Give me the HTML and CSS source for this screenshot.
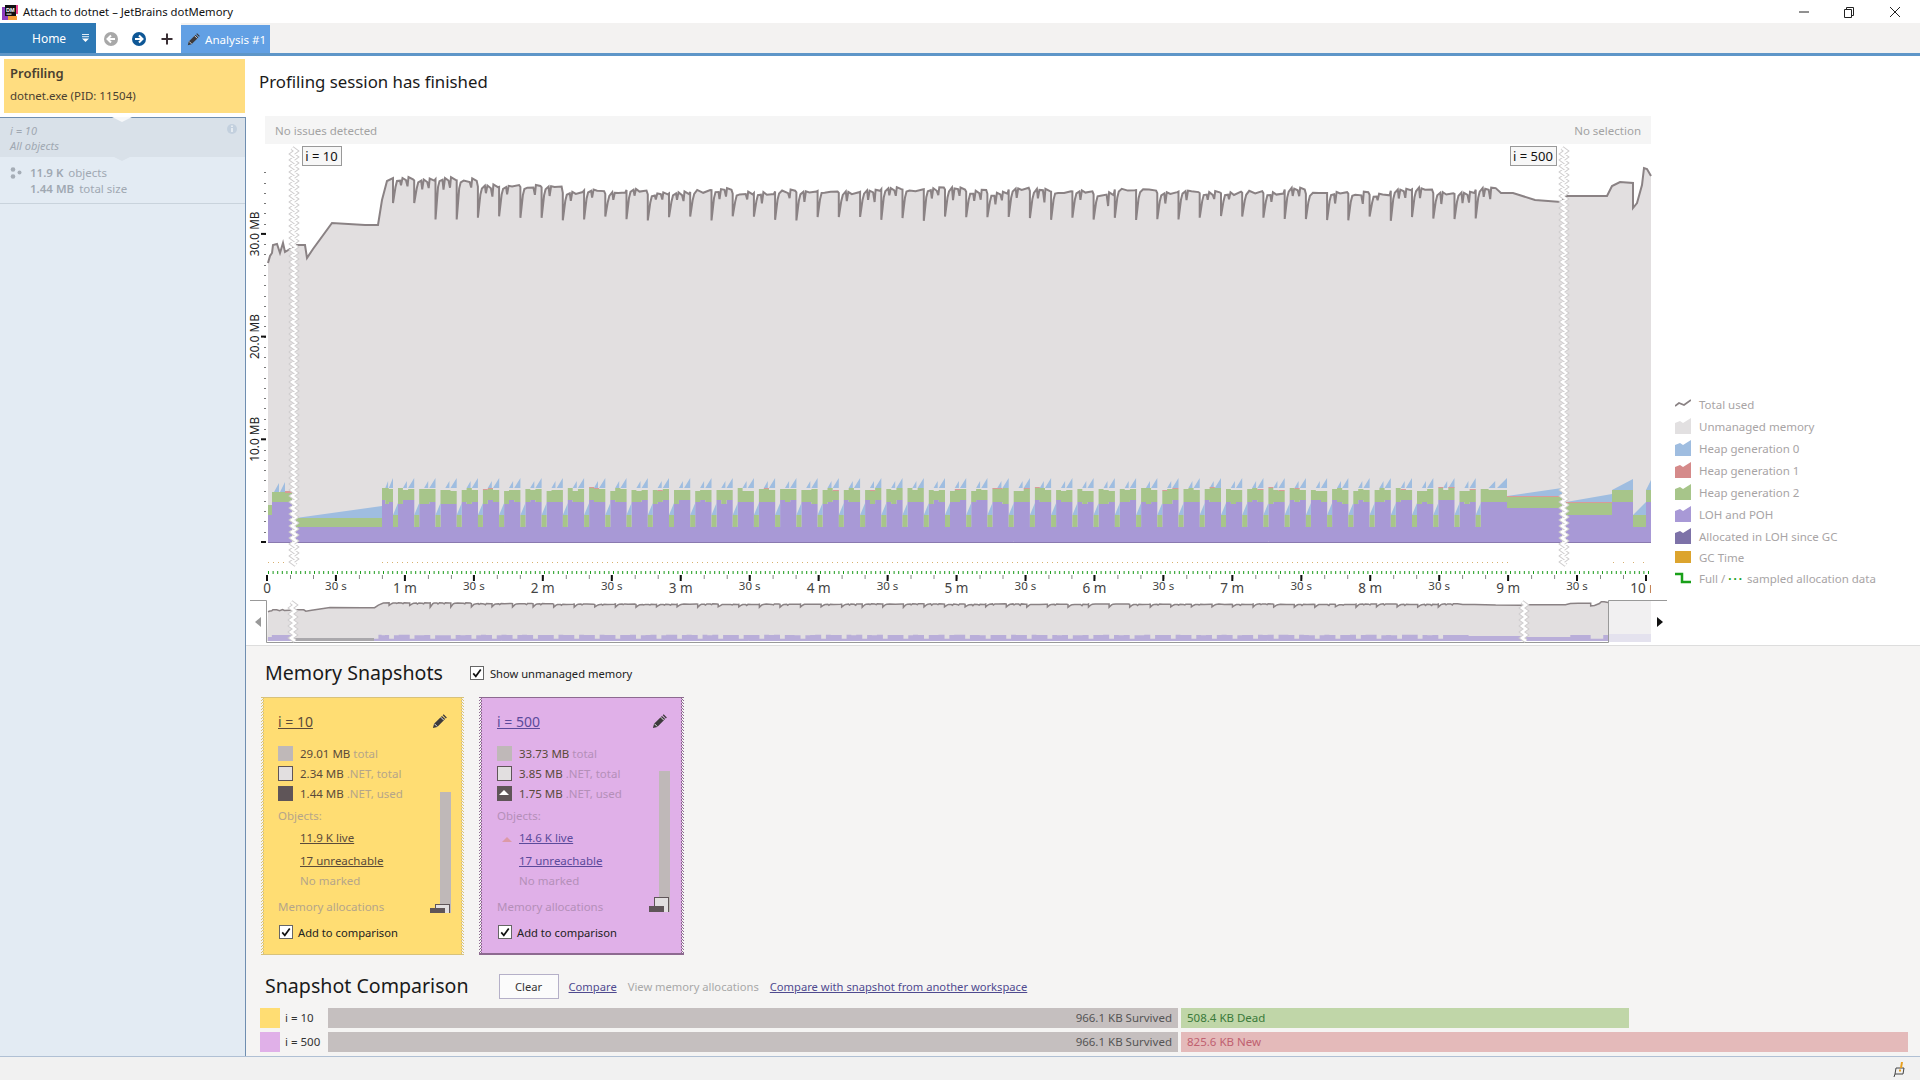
FILE: index.html
```html
<!DOCTYPE html>
<html lang="en">
<head>
  <meta charset="UTF-8" />
  <title>Attach to dotnet – JetBrains dotMemory</title>
  <link rel="stylesheet" href="styles.css">
</head>
<body>
  <svg class="defs" width="0" height="0">
    <symbol id="pencil" viewBox="0 0 16 16">
      <path d="M1 15l1.2-4.6L10.6 2l3.4 3.4-8.4 8.4z" fill="#3d3a3c"/>
      <path d="M11.4 1.2l1-.9 3.4 3.4-1 1z" fill="#3d3a3c"/>
      <path d="M2.6 10.4l3 3M9.4 3.4l3.2 3.2" stroke="#f4f4f4" stroke-width="1" fill="none"/>
    </symbol>
    <symbol id="check" viewBox="0 0 14 14">
      <path d="M2.6 7.4l3 3.4 5.8-8" stroke="#111" stroke-width="2" fill="none"/>
    </symbol>
  </svg>

  <header class="titlebar">
    <svg class="app-logo" width="16" height="16" viewBox="0 0 16 16">
      <rect x="0" y="3" width="14" height="13" fill="#8f3fc0"/>
      <rect x="8" y="1" width="8" height="9" fill="#e8458f"/>
      <rect x="6" y="12" width="9" height="4" fill="#f4a03a"/>
      <rect x="3" y="1" width="11" height="11" fill="#111"/>
      <text x="4" y="8" class="logo-text">DM</text>
      <rect x="4.5" y="9.6" width="5" height="1" fill="#fff"/>
    </svg>
    <span class="window-title">Attach to dotnet – JetBrains dotMemory</span>
    <div class="window-buttons">
      <svg width="46" height="20" viewBox="0 0 46 20"><path d="M19 10h10" stroke="#222"/></svg>
      <svg width="46" height="20" viewBox="0 0 46 20"><path d="M18.5 7.5h7v8h-7zM20.5 7.500v-2h7v8h-2" stroke="#222" fill="none"/></svg>
      <svg width="46" height="20" viewBox="0 0 46 20"><path d="M18 5l10 10M28 5L18 15" stroke="#222" fill="none"/></svg>
    </div>
  </header>

  <nav class="tabbar">
    <div class="home-tab">
      <span>Home</span>
      <svg class="home-menu" width="7" height="8" viewBox="0 0 8 9"><path d="M0 .5h8M0 3h8" stroke="#fff"/><path d="M0 5h8L4 9z" fill="#fff"/></svg>
    </div>
    <div class="nav-buttons">
      <svg width="16" height="16" viewBox="0 0 16 16"><circle cx="8" cy="8" r="7" fill="#a8a8a8"/><path d="M12 8H5M8 4.500L4.500 8 8 11.500" stroke="#fff" stroke-width="2" fill="none"/></svg>
      <svg width="16" height="16" viewBox="0 0 16 16"><circle cx="8" cy="8" r="7" fill="#0e5796"/><path d="M4 8h7M8 4.500L11.500 8 8 11.500" stroke="#fff" stroke-width="2" fill="none"/></svg>
      <svg width="16" height="16" viewBox="0 0 16 16"><path d="M8 2.500v11M2.500 8h11" stroke="#3a2f35" stroke-width="2"/></svg>
    </div>
    <div class="analysis-tab">
      <svg width="13" height="13"><use href="#pencil"/></svg>
      <span>Analysis #1</span>
    </div>
  </nav>

  <div class="workspace">
    <aside class="sidebar">
      <div class="profiling-card">
        <strong>Profiling</strong>
        <span>dotnet.exe (PID: 11504)</span>
      </div>
      <div class="snapshot-list">
        <div class="snapshot-head">
          <span>i = 10</span>
          <span>All objects</span>
          <svg class="info-icon" width="10" height="10" viewBox="0 0 10 10"><circle cx="5" cy="5" r="5" fill="#c3d0de"/><path d="M5 4v4M5 1.500v1.500" stroke="#eef2f6" stroke-width="1.600"/></svg>
        </div>
        <div class="snapshot-body">
          <svg class="dots-icon" width="12" height="12" viewBox="0 0 12 12"><circle cx="3" cy="2.500" r="2.300" fill="#a5adb6"/><circle cx="9.500" cy="5.500" r="2" fill="#a5adb6"/><circle cx="3" cy="9.500" r="2.300" fill="#a5adb6"/></svg>
          <div class="snapshot-stats">
            <div><b>11.9 K</b> objects</div>
            <div><b>1.44 MB</b> total size</div>
          </div>
        </div>
      </div>
    </aside>

    <main class="main">
      <section class="session">
        <h1>Profiling session has finished</h1>
        <div class="chart-row">
          <div class="chart-col">
            <div class="issues-bar">
              <span>No issues detected</span>
              <span>No selection</span>
            </div>
            <div id="chart"></div>
          </div>
          <ul class="legend">
            <li><svg width="16" height="16" viewBox="0 0 16 16"><path d="M0 10l4-3 5 2 7-5" stroke="#8a8284" stroke-width="1.800" fill="none"/></svg><span>Total used</span></li>
            <li><svg width="16" height="16" viewBox="0 0 16 16"><path d="M0 16V5l5-2 3 2 8-5v16z" fill="#e2e0e1"/></svg><span>Unmanaged memory</span></li>
            <li><svg width="16" height="16" viewBox="0 0 16 16"><path d="M0 16V5l5-2 3 2 8-5v16z" fill="#9fbde0"/></svg><span>Heap generation 0</span></li>
            <li><svg width="16" height="16" viewBox="0 0 16 16"><path d="M0 16V5l5-2 3 2 8-5v16z" fill="#d58a8a"/></svg><span>Heap generation 1</span></li>
            <li><svg width="16" height="16" viewBox="0 0 16 16"><path d="M0 16V5l5-2 3 2 8-5v16z" fill="#a7c58a"/></svg><span>Heap generation 2</span></li>
            <li><svg width="16" height="16" viewBox="0 0 16 16"><path d="M0 16V5l5-2 3 2 8-5v16z" fill="#a899d6"/></svg><span>LOH and POH</span></li>
            <li><svg width="16" height="16" viewBox="0 0 16 16"><path d="M0 16V5l5-2 3 2 8-5v16z" fill="#7d72a8"/></svg><span>Allocated in LOH since GC</span></li>
            <li class="legend-gc"><svg width="16" height="12" viewBox="0 0 16 12"><rect width="16" height="12" fill="#dca42e"/></svg><span>GC Time</span></li>
            <li><svg width="16" height="12" viewBox="0 0 16 12"><path d="M0 2h7v8h9" stroke="#19a019" stroke-width="2.500" fill="none"/></svg><span>Full / <i class="green-dots">···</i> sampled allocation data</span></li>
          </ul>
        </div>
      </section>

      <section class="snapshots">
        <div class="section-head">
          <h2>Memory Snapshots</h2>
          <label class="check-label"><span class="checkbox"><svg width="12" height="12"><use href="#check"/></svg></span>Show unmanaged memory</label>
        </div>

        <div class="cards">
          <article class="card card-yellow">
            <div class="card-title"><a>i = 10</a><svg width="15" height="15"><use href="#pencil"/></svg></div>
            <div class="stat first-stat"><span class="swatch swatch-total"></span><b>29.01 MB</b> total</div>
            <div class="stat"><span class="swatch swatch-net"></span><b>2.34 MB</b> .NET, total</div>
            <div class="stat"><span class="swatch swatch-used"></span><b>1.44 MB</b> .NET, used</div>
            <div class="muted objects">Objects:</div>
            <div class="object-row live-row"><a>11.9 K live</a></div>
            <div class="object-row unreachable-row"><a>17 unreachable</a></div>
            <div class="object-row muted">No marked</div>
            <div class="muted allocations">Memory allocations</div>
            <label class="check-label add-check"><span class="checkbox"><svg width="12" height="12"><use href="#check"/></svg></span>Add to comparison</label>
            <div class="mini-bars bars-short">
              <span class="bar-total"></span><span class="bar-net"></span><span class="bar-used"></span>
            </div>
          </article>

          <article class="card card-purple">
            <div class="card-title"><a>i = 500</a><svg width="15" height="15"><use href="#pencil"/></svg></div>
            <div class="stat first-stat"><span class="swatch swatch-total"></span><b>33.73 MB</b> total</div>
            <div class="stat"><span class="swatch swatch-net"></span><b>3.85 MB</b> .NET, total</div>
            <div class="stat"><span class="swatch swatch-used swatch-up"></span><b>1.75 MB</b> .NET, used</div>
            <div class="muted objects">Objects:</div>
            <div class="object-row live-row"><span class="up-mark"></span><a>14.6 K live</a></div>
            <div class="object-row unreachable-row"><a>17 unreachable</a></div>
            <div class="object-row muted">No marked</div>
            <div class="muted allocations">Memory allocations</div>
            <label class="check-label add-check"><span class="checkbox"><svg width="12" height="12"><use href="#check"/></svg></span>Add to comparison</label>
            <div class="mini-bars bars-tall">
              <span class="bar-total"></span><span class="bar-net"></span><span class="bar-used"></span>
            </div>
          </article>
        </div>

        <div class="compare-head">
          <h2>Snapshot Comparison</h2>
          <button class="clear-btn">Clear</button>
          <a class="link">Compare</a>
          <span class="disabled-link">View memory allocations</span>
          <a class="link">Compare with snapshot from another workspace</a>
        </div>

        <div class="compare-row">
          <span class="compare-swatch swatch-yellow"></span>
          <span class="compare-label">i = 10</span>
          <div class="seg seg-survived">966.1 KB Survived</div>
          <div class="seg seg-dead">508.4 KB Dead</div>
        </div>
        <div class="compare-row">
          <span class="compare-swatch swatch-purple"></span>
          <span class="compare-label">i = 500</span>
          <div class="seg seg-survived">966.1 KB Survived</div>
          <div class="seg seg-new">825.6 KB New</div>
        </div>
      </section>
    </main>
  </div>

  <footer class="statusbar">
    <svg width="14" height="16" viewBox="0 0 14 16">
      <path d="M3 7h8l-1 6H2zM2 13l-1 3" stroke="#444" fill="none"/>
      <path d="M8 1h2l-1 6H7z" fill="#e8a020"/>
      <rect x="6" y="8.500" width="2" height="2" fill="#e8a020"/>
    </svg>
  </footer>

  <script src="chart.js"></script>
</body>
</html>
```

FILE: styles.css
```css
* {
  box-sizing: border-box;
}
body {
  margin: 0;
  width: 1920px;
  height: 1080px;
  overflow: hidden;
  display: flex;
  flex-direction: column;
  font-family: "Noto Sans", sans-serif;
  font-size: 11.5px;
  color: #222;
  background: #fff;
}
.defs {
  display: block;
  height: 0;
}
a {
  text-decoration: underline;
}
h1, h2, ul {
  margin: 0;
  padding: 0;
  font-weight: 400;
}

/* title bar */
.titlebar {
  height: 23px;
  display: flex;
  align-items: center;
  padding-left: 2px;
  flex: none;
}
.logo-text {
  font-family: "Liberation Sans", sans-serif;
  font-size: 5.5px;
  font-weight: 700;
  fill: #fff;
}
.window-title {
  margin-left: 5px;
  font-size: 11.3px;
  color: #111;
}
.window-buttons {
  margin-left: auto;
  padding-right: 2px;
  display: flex;
}

/* tabs */
.tabbar {
  height: 33px;
  flex: none;
  display: flex;
  background: #f3f2f1;
  border-bottom: 3px solid #5e96c8;
}
.home-tab {
  width: 96px;
  background: #2e79b5;
  color: #fff;
  display: flex;
  align-items: center;
  padding-left: 32px;
  font-size: 12px;
}
.home-menu {
  margin-left: 16px;
}
.nav-buttons {
  width: 85px;
  background: #fff;
  display: flex;
  align-items: center;
  gap: 12px;
  padding: 2px 0 0 7px;
}
.analysis-tab {
  width: 89px;
  margin-top: 2px;
  background: #62a0e4;
  color: #fff;
  display: flex;
  align-items: center;
  gap: 5px;
  padding-left: 6px;
  font-size: 11.6px;
}

/* layout */
.workspace {
  height: 1000px;
  flex: none;
  display: flex;
}
.sidebar {
  width: 246px;
  flex: none;
  display: flex;
  flex-direction: column;
}
.main {
  flex: 1;
  display: flex;
  flex-direction: column;
}

/* sidebar */
.profiling-card {
  margin: 3px 1px 0 4px;
  height: 54px;
  padding: 5px 6px;
  background: #ffdd80;
  color: #4a4030;
  display: flex;
  flex-direction: column;
  gap: 6px;
}
.profiling-card strong {
  font-size: 13px;
  font-weight: 600;
}
.snapshot-list {
  flex: 1;
  margin-top: 4px;
  background: #e3ebf3;
  border-top: 1px solid #6f8eb0;
  border-right: 1px solid #6f8eb0;
  color: #a0a8b2;
}
.snapshot-head {
  position: relative;
  height: 39px;
  background: #d9e1e9;
  padding: 5px 0 0 10px;
  display: flex;
  flex-direction: column;
  font-size: 11px;
  font-style: italic;
}
.snapshot-head::before {
  content: "";
  position: absolute;
  left: 112px;
  top: -1px;
  border: 10px solid transparent;
  border-top: 5px solid #f6f8fa;
  border-bottom: 0;
}
.snapshot-head::after {
  content: "";
  position: absolute;
  left: 114px;
  top: 39px;
  border: 8px solid transparent;
  border-top: 4px solid #d9e1e9;
  border-bottom: 0;
}
.info-icon {
  position: absolute;
  right: 8px;
  top: 6px;
}
.snapshot-body {
  height: 47px;
  border-bottom: 1px solid #c9d3dc;
  padding: 8px 0 0 10px;
  display: flex;
  gap: 8px;
}
.dots-icon {
  margin-top: 2px;
}
.snapshot-stats div {
  height: 16px;
  line-height: 16px;
}
.snapshot-stats b {
  font-weight: 600;
  margin-right: 2px;
}

/* session / chart */
.session {
  height: 590px;
  flex: none;
  border-bottom: 1px solid #ddd;
}
.session h1 {
  height: 60px;
  padding: 13px 0 0 13px;
  font-size: 16.8px;
  line-height: 26px;
  color: #1a1a1a;
}
.chart-row {
  display: flex;
}
.chart-col {
  width: 1429px;
  flex: none;
}
.issues-bar {
  margin-left: 19px;
  width: 1386px;
  height: 28px;
  background: #f5f5f5;
  color: #a3a3a3;
  display: flex;
  justify-content: space-between;
  align-items: center;
  padding: 0 10px;
}
#chart svg {
  display: block;
}
.axis-label {
  font-size: 11.8px;
  fill: #222;
}
.time-small {
  font-size: 11.5px;
  fill: #444;
  text-anchor: middle;
}
.time-big {
  font-size: 13.5px;
  fill: #444;
  text-anchor: middle;
}
.flag-box {
  fill: #f7f7f7;
  stroke: #999;
}
.flag-text {
  font-size: 13px;
  fill: #111;
  text-anchor: middle;
}

/* legend */
.legend {
  list-style: none;
  margin-top: 277px;
  color: #a8a4a5;
}
.legend li {
  height: 22px;
  display: flex;
  align-items: center;
  gap: 8px;
  white-space: pre;
}
.legend .legend-gc {
  height: 20px;
}
.green-dots {
  color: #19a019;
  font-style: normal;
  font-weight: 700;
  letter-spacing: 2px;
}

/* snapshots */
.snapshots {
  flex: 1;
  background: #f5f4f3;
  padding-left: 14px;
}
.section-head {
  margin: 11px 0 0 5px;
  height: 30px;
  display: flex;
  align-items: center;
  gap: 27px;
}
.section-head h2,
.compare-head h2 {
  font-size: 19.6px;
  color: #1a1a1a;
}
.section-head .check-label {
  margin-top: 2px;
  gap: 6px;
}
.compare-head h2 {
  margin-top: -2px;
}
.check-label {
  display: flex;
  align-items: center;
  gap: 5px;
  color: #222;
  font-size: 11.2px;
}
.checkbox {
  width: 14px;
  height: 14px;
  background: #fff;
  border: 1px solid #666;
  display: flex;
  align-items: center;
  justify-content: center;
}
.cards {
  margin: 10px 0 0 1px;
  display: flex;
  gap: 15px;
}
.card {
  position: relative;
  width: 203px;
  height: 258px;
  padding: 13px 17px 0;
  color: #5a4a3a;
}
.card + .card {
  width: 205px;
  padding-left: 18px;
}
.card::before,
.card::after {
  content: "";
  position: absolute;
  top: 0;
  bottom: 0;
  width: 3px;
  background-size: 3px 3px;
  background-position: 0 0, 0 3px;
  background-repeat: repeat-y;
}
.card::before {
  left: 0;
  background-image:
    linear-gradient(to bottom right, #f5f4f3 38%, var(--edge) 38% 62%, transparent 62%),
    linear-gradient(to top right, #f5f4f3 38%, var(--edge) 38% 62%, transparent 62%);
}
.card::after {
  right: 0;
  background-image:
    linear-gradient(to bottom left, #f5f4f3 38%, var(--edge) 38% 62%, transparent 62%),
    linear-gradient(to top left, #f5f4f3 38%, var(--edge) 38% 62%, transparent 62%);
}
.card-yellow {
  --edge: #d8c27a;
  background: #ffdd73;
  border-top: 1px solid #d8c27a;
  border-bottom: 1px solid #d8c27a;
}
.card-purple {
  --edge: #8d6a90;
  background: #e0b0e8;
  border-top: 1px solid #8d6a90;
  border-bottom: 2px solid #8d6a90;
}
.card-title {
  height: 20px;
  display: flex;
  align-items: center;
  justify-content: space-between;
  font-size: 14px;
}
.card-purple .card-title a,
.card-purple .object-row a {
  color: #5b4a9b;
}
.stat {
  height: 20px;
  display: flex;
  align-items: center;
  white-space: pre;
  color: #b5a58a;
}
.card-purple .stat,
.card-purple .muted {
  color: #b48fb8;
}
.first-stat {
  margin-top: 12px;
}
.stat b {
  font-weight: 400;
  color: #5a4a3a;
}
.swatch {
  width: 15px;
  height: 15px;
  margin-right: 7px;
}
.swatch-total {
  background: #bfb8b8;
}
.swatch-net {
  background: #e2dfe0;
  border: 1px solid #5f5558;
}
.swatch-used {
  background: #5f5558;
}
.swatch-up {
  position: relative;
}
.swatch-up::after {
  content: "";
  position: absolute;
  left: 2px;
  top: 4px;
  border: 5.5px solid transparent;
  border-top: 0;
  border-bottom: 5px solid #fff;
}
.muted {
  color: #b5a58a;
}
.objects {
  margin-top: 3px;
  height: 20px;
  line-height: 20px;
}
.object-row {
  position: relative;
  height: 20px;
  line-height: 20px;
  margin-left: 22px;
}
.live-row {
  margin-top: 2px;
}
.unreachable-row {
  margin-top: 3px;
}
.up-mark {
  position: absolute;
  left: -17px;
  top: 9px;
  border: 5px solid transparent;
  border-top: 0;
  border-bottom: 5px solid #dc9aa6;
}
.allocations {
  margin-top: 6px;
  height: 20px;
  line-height: 20px;
}
.add-check {
  margin: 5px 0 0 1px;
  height: 20px;
}
.mini-bars {
  position: absolute;
  bottom: 41px;
  width: 21px;
}
.bars-short {
  left: 169px;
}
.bars-tall {
  left: 170px;
}
.mini-bars span {
  position: absolute;
  bottom: 0;
}
.bar-total {
  right: 0;
  width: 11px;
  background: #bfb8b8;
}
.bar-net {
  background: #e2dfe0;
  border: 1px solid #5f5558;
  border-bottom-width: 0;
  width: 15px;
  right: 1px;
}
.bar-used {
  background: #5f5558;
  width: 15px;
}
.bars-short .bar-total { height: 121px; }
.bars-short .bar-net { height: 9px; }
.bars-short .bar-used { height: 5px; right: 6px; }
.bars-tall .bar-total { height: 141px; }
.bars-tall .bar-net { height: 15px; }
.bars-tall .bar-used { height: 6px; right: 6px; }

/* comparison */
.compare-head {
  margin: 19px 0 0 5px;
  height: 25px;
  display: flex;
  align-items: center;
  white-space: nowrap;
  font-size: 11.2px;
}
.clear-btn {
  width: 60px;
  height: 25px;
  margin: 0 10px 0 30px;
  background: #fbfbfb;
  border: 1px solid #b5b0c8;
  font: inherit;
  color: #333;
}
.link {
  color: #4f4a8f;
  margin-right: 11px;
}
.disabled-link {
  color: #a8a8a8;
  margin-right: 11px;
}
.compare-row {
  height: 20px;
  margin-top: 4px;
  display: flex;
}
.compare-head + .compare-row {
  margin-top: 9px;
}
.compare-swatch {
  width: 20px;
}
.swatch-yellow {
  background: #ffdd73;
}
.swatch-purple {
  background: #e0b0e8;
}
.compare-label {
  width: 48px;
  padding-left: 5px;
  line-height: 20px;
  color: #333;
}
.seg {
  height: 20px;
  line-height: 20px;
  padding: 0 6px;
  white-space: nowrap;
}
.seg-survived {
  width: 850px;
  margin-right: 3px;
  background: #c5bfbf;
  color: #555;
  text-align: right;
}
.seg-dead {
  width: 448px;
  background: #c0d6a8;
  color: #3a7a3a;
}
.seg-new {
  width: 727px;
  background: #e4baba;
  color: #c06070;
}

/* status bar */
.statusbar {
  flex: 1;
  background: #f1f1f1;
  border-top: 1px solid #b0c0d4;
  display: flex;
  align-items: center;
  justify-content: flex-end;
  padding-right: 13px;
}
```

FILE: chart.js
```js
// Draws the memory timeline. All coordinates are page pixels, the viewBox lines them up.
const LEFT = 268, RIGHT = 1651, BASE = 542;
const COLORS = {
  area: '#e2dfe0', line: '#8a8284', purple: '#a899d6', green: '#a7c58a',
  blue: '#9fbde0', red: '#d99a98'
};

// small seeded random so the picture is the same every time
let seed = 7;
function rnd() {
  seed = (seed * 16807) % 2147483647;
  return seed / 2147483647;
}

function rect(x, y, w, h) {
  return `M${x.toFixed(1)} ${y}h${w.toFixed(1)}v${h}h${(-w).toFixed(1)}z`;
}
function tri(x1, x2, y, top) {
  return `M${x1.toFixed(1)} ${y}H${x2.toFixed(1)}V${top}z`;
}

// total used line
const line = [[268, 263], [270, 256], [272, 253], [273, 245], [277, 244], [280, 253], [283, 243],
  [285, 252], [290, 249], [292, 249], [297, 245], [305, 245], [307, 258], [313, 249], [332, 223],
  [365, 225], [378, 225], [382, 200], [387, 181], [393, 178]];

const GAPS = 52, PERIOD = 21.23, FIRST_GAP = 393;
for (let k = 0; k < GAPS; k++) {
  const x = FIRST_GAP + k * PERIOD;
  const dip = k < 2 ? 203 : 216 + rnd() * 5;
  const top = k < 4 ? 177 + rnd() * 2 : (k < 8 ? 184 + rnd() * 3 : 187 + rnd() * 6);
  line.push([x, top + 2], [x, dip], [x + 2.5, top + 10], [x + 4, top + 4], [x + 7, top + rnd() * 4]);
  if (rnd() < 0.7) line.push([x + 8, top + 7 + rnd() * 6], [x + 9.5, top + 1]);
  line.push([x + 13, top + 1 + rnd() * 3]);
  if (rnd() < 0.6) line.push([x + 14.5, top + 7 + rnd() * 7], [x + 15.5, top]);
  line.push([x + 20, top + rnd() * 3]);
}
line.push([1501, 193], [1513, 193], [1535, 200], [1561, 202], [1567, 196], [1607, 196], [1612, 186],
  [1620, 182], [1633, 183], [1633, 208], [1637, 203], [1642, 185], [1644, 168], [1647, 169], [1651, 176]);

function pointsToD(pts) {
  return pts.map((p, i) => (i ? 'L' : 'M') + p[0].toFixed(1) + ' ' + p[1].toFixed(1)).join('');
}
const lineD = pointsToD(line);
const areaD = lineD + `L${RIGHT} ${BASE}L${LEFT} ${BASE}z`;

// heap stacks
let purple = '', green = '', blue = '', red = '';

function stackBlock(x1, x2) {
  // one stretch between two GC gaps
  const w = x2 - x1;
  let x = x1;
  const cuts = [0.3, 0.62, 1];
  cuts.forEach(c => {
    const end = x1 + w * c;
    const pTop = 500 + Math.round(rnd() * 2) * 2;
    const gTop = 488 + Math.round(rnd() * 3);
    purple += rect(x, pTop, end - x, BASE - pTop);
    green += rect(x, gTop, end - x, pTop - gTop);
    if (rnd() < 0.15) red += rect(x, gTop - 1, end - x, 1);
    x = end;
  });
  blue += tri(x1 + w * 0.3, x1 + w * 0.55, 488, 481);
  blue += tri(x1 + w * 0.62, x2, 488, 478);
}

// start of the session, left of the first marker
purple += rect(268, 515, 4, 27) + rect(272, 502, 20, 40);
green += rect(268, 505, 4, 10) + rect(272, 492, 20, 10);
red += rect(285, 491, 7, 2);
blue += tri(274, 279, 492, 483) + tri(280, 285, 492, 482);

// the long flat stretch before one minute
purple += rect(296, 527, 86, 15);
green += rect(296, 518, 86, 9);
blue += 'M296 518L382 506V518z';

stackBlock(382, FIRST_GAP);
for (let k = 0; k < GAPS; k++) {
  const x = FIRST_GAP + k * PERIOD;
  purple += rect(x, 527, 5, 15);
  green += rect(x, 515, 5, 12);
  blue += tri(x, x + 5, 515, 503);
  stackBlock(x + 5, k === GAPS - 1 ? 1507 : x + PERIOD);
}

// right end of the chart
purple += rect(1507, 508, 55, 34);
green += rect(1507, 497, 55, 11);
red += rect(1507, 496, 55, 1);
blue += 'M1507 496L1562 488V496z';
purple += rect(1566, 515, 46, 27);
green += rect(1566, 503, 46, 12);
red += rect(1566, 502, 46, 1);
blue += 'M1566 502L1612 494V502z';
purple += rect(1612, 502, 21, 40);
green += rect(1612, 490, 21, 12);
blue += 'M1612 490L1633 479V490z';
purple += rect(1633, 527, 13, 15);
green += rect(1633, 515, 13, 12);
blue += 'M1633 515L1646 502V515z';
purple += rect(1646, 502, 5, 40);
green += rect(1646, 490, 5, 12);
blue += 'M1646 490L1651 480V490z';

function stacks() {
  return `<path d="${purple}" fill="${COLORS.purple}"/><path d="${green}" fill="${COLORS.green}"/>` +
    `<path d="${blue}" fill="${COLORS.blue}"/><path d="${red}" fill="${COLORS.red}"/>`;
}

function zigzag(x, y1, y2) {
  let pts = '';
  for (let y = y1, i = 0; y <= y2; y += 3, i++) pts += `${x + (i % 2 ? 2 : -2)},${y} `;
  return `<polyline points="${pts}" fill="none" stroke="#cfcdce" stroke-width="4.5"/>` +
    `<polyline points="${pts}" fill="none" stroke="#fff" stroke-width="2.5"/>`;
}

function flag(x, w, text) {
  return `<rect class="flag-box" x="${x + 0.5}" y="146.5" width="${w}" height="19"/>` +
    `<text class="flag-text" x="${x + w / 2}" y="161">${text}</text>`;
}

let out = '';

// value axis
let ticks = '';
for (let y = BASE; y > 170; y -= 10.27) ticks += rect(264, Math.round(y), 2, 1);
out += `<path d="${ticks}" fill="#777"/>`;
[1, 2, 3].forEach(n => {
  const y = BASE - n * 102.7;
  out += `<rect x="261" y="${y - 1}" width="5" height="2" fill="#111"/>`;
  out += `<text class="axis-label" transform="translate(259 ${y}) rotate(-90)" text-anchor="middle">${n}0.0 MB</text>`;
});
out += `<rect x="261" y="${BASE - 1}" width="5" height="2" fill="#111"/>`;

// main plot
out += `<path d="${areaD}" fill="${COLORS.area}"/>` + stacks();
out += `<rect x="${LEFT}" y="${BASE}" width="${RIGHT - LEFT}" height="1" fill="#8a7ab0"/>`;
out += `<path d="${lineD}" fill="none" stroke="${COLORS.line}" stroke-width="2"/>`;

// GC time dots and sampled allocation dots
let gcDots = '';
for (let x = 268; x < 285; x += 5) gcDots += rect(x, 562, 1, 1);
for (let x = 382; x < 1510; x += 5) gcDots += rect(x, 562, 1, 1);
for (let x = 1613; x < 1650; x += 10) gcDots += rect(x, 562, 1, 1);
out += `<path d="${gcDots}" fill="#d8b070"/>`;
let sampled = '';
for (let x = 268; x < RIGHT; x += 4.6) sampled += rect(x, 571, 1, 3);
out += `<path d="${sampled}" fill="#1a9a1a"/>`;

// time axis, one step is 30 seconds
const STEP = 68.95;
let minor = '', major = '', labels = '';
for (let x = 267; x <= RIGHT; x += STEP / 3) minor += rect(x, 575, 1, 4);
for (let k = 0; k <= 20; k++) {
  const x = 267 + k * STEP;
  major += rect(x - 1, 575, 2, 6);
  if (k === 0) labels += `<text class="time-big" x="${x}" y="593">0</text>`;
  else if (k % 2) labels += `<text class="time-small" x="${x}" y="590">30 s</text>`;
  else labels += `<text class="time-big" x="${x}" y="593">${k / 2} m</text>`;
}
out += `<path d="${minor}" fill="#888"/><path d="${major}" fill="#111"/>`;
out += `<g clip-path="url(#timeClip)">${labels}</g>`;

// overview strip under the time axis
const SCALE_X = 0.969, OV_BASE = 641;
const overviewLine = line.map(p => [267 + (p[0] - 267) * SCALE_X, OV_BASE - (BASE - p[1]) * 0.105]);
const ovD = pointsToD(overviewLine);
out += `<path d="${ovD}L1608 ${OV_BASE}L267 ${OV_BASE}z" fill="${COLORS.area}"/>`;
out += `<g opacity="0.7" transform="translate(267 ${OV_BASE}) scale(${SCALE_X} 0.15) translate(-267 ${-BASE})"><path d="${purple}" fill="${COLORS.purple}"/></g>`;
out += `<rect x="294" y="638" width="80" height="3" fill="#aaa8ac"/>`;
out += `<path d="${ovD}" fill="none" stroke="${COLORS.line}" stroke-width="1.500"/>`;
out += `<rect x="1609" y="601" width="42" height="41" fill="#f1f0f1"/>`;
out += `<rect x="1609" y="634" width="42" height="8" fill="#e4e2ee"/>`;
out += `<path d="M250 600.500H266.500V642.500H1608.500V600.500H1667" fill="none" stroke="#999"/>`;
out += `<path d="M261 617l-6 5 6 5z" fill="#999"/><path d="M1657 617l6 5-6 5z" fill="#111"/>`;
out += zigzag(293, 602, 642) + zigzag(1524, 602, 642);

// snapshot markers and their flags
out += zigzag(294, 148, 565) + zigzag(1564, 148, 565);
out += flag(302, 39, 'i = 10') + flag(1510, 46, 'i = 500');

document.getElementById('chart').innerHTML =
  `<svg width="1429" height="501" viewBox="246 144 1429 501">` +
  `<defs><clipPath id="timeClip"><rect x="246" y="580" width="1405" height="20"/></clipPath></defs>` +
  out + `</svg>`;
```
